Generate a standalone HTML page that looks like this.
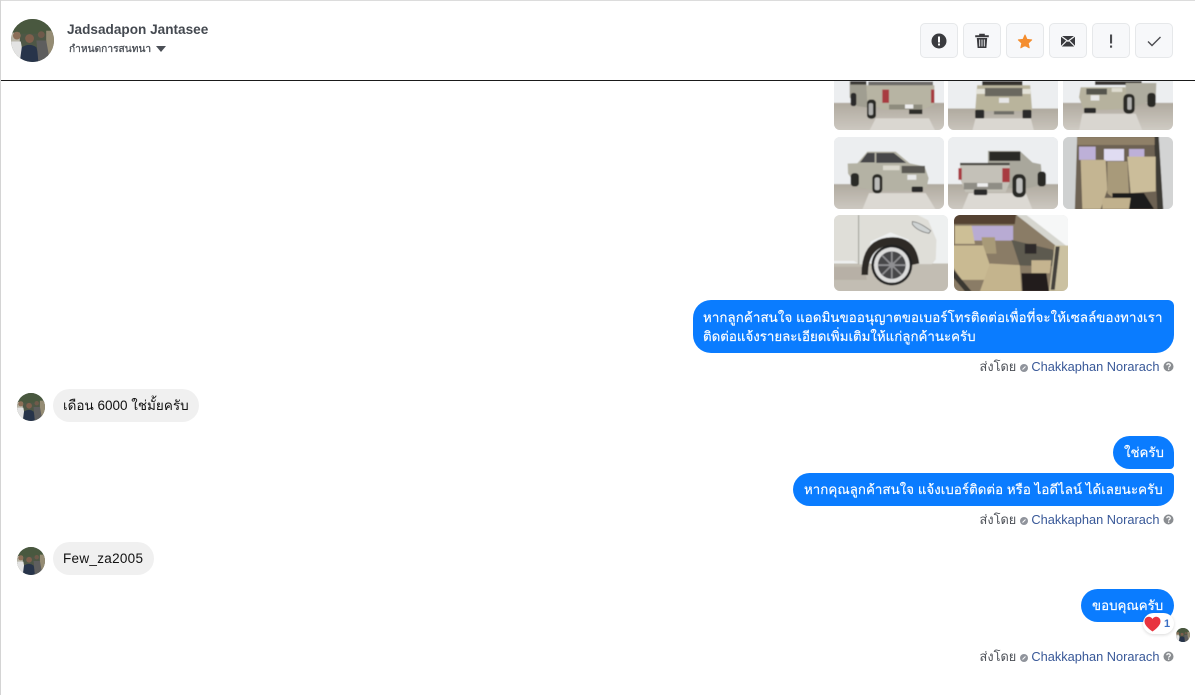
<!DOCTYPE html>
<html lang="th"><head><meta charset="utf-8"><title>Chat</title>
<style>
html,body{margin:0;padding:0;background:#fff}
body{width:1195px;height:695px;position:relative;overflow:hidden;font-family:"Liberation Sans","Noto Sans CJK SC",sans-serif;font-size:14px}
.a{position:absolute;white-space:nowrap}
.btn{position:absolute;top:23px;width:36px;height:33px;border:1px solid #e6e8ea;border-radius:5px;background:#f7f8fa}
.btn svg{position:absolute;left:0;top:0;width:36px;height:33px}
.b{position:absolute;background:#0a7cff;color:#fff;white-space:nowrap;box-sizing:border-box;line-height:19px;font-size:13.3px;-webkit-text-stroke:.15px #fff}
.g{position:absolute;background:#f0f0f0;color:#111;white-space:nowrap;box-sizing:border-box;height:33px;line-height:34px;border-radius:17px;padding:0 0 0 10px;font-size:13.5px}
.ph{position:absolute;border-radius:6px;overflow:hidden;background:#ddd}
.ph svg{display:block;width:100%;height:100%}
.s{position:absolute;right:21px;white-space:nowrap;font-size:12.8px;height:16px;line-height:16px;color:#4b4f56}
.s b{font-weight:normal;color:#385898}
.s svg{vertical-align:-1px}
.av{position:absolute;border-radius:50%;overflow:hidden}
.av svg{display:block;width:100%;height:100%}
</style></head><body>
<svg width="0" height="0" style="position:absolute"><defs>
<linearGradient id="fl" x1="0" y1="0" x2="0" y2="1"><stop offset="0" stop-color="#b0aa9f"/><stop offset="1" stop-color="#d2cec7"/></linearGradient>
<filter id="bl" x="-5%" y="-5%" width="110%" height="110%"><feGaussianBlur stdDeviation="1.600"/></filter>
<symbol id="avt" viewBox="0 0 44 44"><rect width="44" height="44" fill="#4e5746"/><rect x="0" y="0" width="44" height="15" fill="#49583f"/><rect x="0" y="14" width="9" height="30" fill="#b9b6a8"/><rect x="36" y="12" width="8" height="32" fill="#958c74"/><circle cx="6" cy="17" r="4" fill="#8c6f58"/><path d="M0 23h10l3 17H0z" fill="#e3e3e3"/><circle cx="19" cy="20" r="4.500" fill="#7f5f4c"/><path d="M11 29q8-5 15 0l4 15H9z" fill="#27344a"/><circle cx="31" cy="16" r="3.500" fill="#6f5a4a"/><path d="M26 22h10l4 22H28z" fill="#5e5e5e"/></symbol>
<symbol id="ic" viewBox="0 0 8 8"><circle cx="4" cy="4" r="4" fill="#90949c"/><path d="M2.500 5.500 5.500 2.500" stroke="#fff" stroke-width="1"/></symbol>
<symbol id="iq" viewBox="0 0 11 11"><circle cx="5.500" cy="5.500" r="5" fill="#8a8d91"/><path d="M3.800 4.300c0-2.100 3.500-2.100 3.500 0 0 1.200-1.700 1.200-1.700 2.300" fill="none" stroke="#fff" stroke-width="1.200"/><rect x="5" y="7.500" width="1.300" height="1.300" fill="#fff"/></symbol>
</defs></svg>

<div class="a" style="left:0;top:0;width:1195px;height:1px;background:#dcdcdc"></div>
<div class="a" style="left:0;top:0;width:1px;height:695px;background:#d4d4d4"></div>

<!-- Row 1 -->
<div class="ph" style="left:834px;top:81px;width:110px;height:49px;border-radius:0 0 6px 6px"><svg viewBox="25 9 330 148" preserveAspectRatio="none"><g filter="url(#bl)"><rect x="5" y="-10" width="370" height="180" fill="#eceef0"/><rect x="5" y="75" width="370" height="100" fill="url(#fl)"/><path d="M150 122h160l20 40H130z" fill="#dad7d1"/>
<path d="M72 9h50l5 80-32-4-23-26z" fill="#a09e91"/><rect x="74" y="9" width="48" height="11" fill="#3c3b38"/><rect x="75" y="45" width="17" height="40" rx="7" fill="#2c2b29"/>
<rect x="128" y="11" width="194" height="13" fill="#6c6b67"/><path d="M122 22h204v58l-36 16H175l-50-20z" fill="#b7b4a3"/><rect x="170" y="35" width="20" height="40" fill="#a83a40"/><rect x="316" y="35" width="10" height="40" fill="#a83a40"/><rect x="190" y="80" width="100" height="15" fill="#8e8c7e"/><rect x="238" y="80" width="25" height="12" fill="#eee"/><rect x="124" y="65" width="27" height="58" rx="11" fill="#2a2927"/><rect x="129" y="76" width="13" height="36" rx="5" fill="#b0b0ae"/><rect x="250" y="95" width="40" height="14" fill="#2f2e2c"/></g></svg></div>
<div class="ph" style="left:948px;top:81px;width:110px;height:49px;border-radius:0 0 6px 6px"><svg viewBox="368 9 328 148" preserveAspectRatio="none"><g filter="url(#bl)"><rect x="350" y="-10" width="370" height="180" fill="#eceef0"/><rect x="350" y="92" width="370" height="90" fill="url(#fl)"/><path d="M450 122h165l10 40H440z" fill="#dad7d1"/>
<rect x="470" y="9" width="120" height="14" fill="#34332f"/><path d="M455 22h158l6 78H449z" fill="#b9b49c"/><rect x="478" y="30" width="112" height="25" fill="#6a685f"/><rect x="452" y="33" width="26" height="15" fill="#e3e2d8"/><rect x="590" y="33" width="24" height="15" fill="#e3e2d8"/><rect x="520" y="60" width="30" height="15" fill="#e6e6e6"/><rect x="449" y="96" width="27" height="26" rx="4" fill="#2c2b29"/><rect x="590" y="96" width="27" height="26" rx="4" fill="#2c2b29"/><rect x="505" y="100" width="60" height="10" fill="#6f6e68"/></g></svg></div>
<div class="ph" style="left:1063px;top:81px;width:110px;height:49px;border-radius:0 0 6px 6px"><svg viewBox="712 9 330 148" preserveAspectRatio="none"><g filter="url(#bl)"><rect x="690" y="-10" width="370" height="180" fill="#eceef0"/><rect x="690" y="75" width="370" height="90" fill="url(#fl)"/><path d="M770 108h160l20 50H760z" fill="#d9d6d0"/>
<rect x="808" y="9" width="140" height="12" fill="#3a3936"/><path d="M900 15h92l-2 55-35 6-55 20z" fill="#aeac9f"/><path d="M765 28h135l5 65-130 5-15-40z" fill="#b6b29e"/><rect x="782" y="32" width="62" height="18" fill="#55544e"/><rect x="858" y="30" width="32" height="12" fill="#dedcd0"/><rect x="795" y="52" width="26" height="16" fill="#e8e8e8"/><rect x="775" y="90" width="36" height="16" rx="4" fill="#2c2b29"/><rect x="893" y="48" width="34" height="60" rx="14" fill="#2a2927"/><rect x="905" y="58" width="13" height="38" rx="5" fill="#b0b0ae"/><rect x="965" y="45" width="25" height="43" rx="10" fill="#2a2927"/></g></svg></div>

<!-- Row 2 -->
<div class="ph" style="left:834px;top:137px;width:110px;height:72px"><svg viewBox="25 176 330 217" preserveAspectRatio="none"><g filter="url(#bl)"><rect x="5" y="160" width="370" height="250" fill="#eceef0"/><rect x="5" y="318" width="370" height="90" fill="url(#fl)"/><path d="M130 345h170l30 50H110z" fill="#dcd9d3"/>
<path d="M95 255 125 220h85l42 35 45 10 12 35-6 28-45 10H150l-55-12-28-40-1-30z" fill="#b4b2a4"/><path d="M103 253 125 224h22v29zM152 224h52l38 30h-90z" fill="#47474a"/><rect x="228" y="263" width="70" height="22" fill="#5a5953"/><rect x="172" y="262" width="50" height="14" fill="#dbd9ce"/><rect x="245" y="290" width="27" height="15" fill="#e8e8e8"/><rect x="140" y="288" width="30" height="58" rx="13" fill="#2a2927"/><rect x="147" y="298" width="15" height="38" rx="6" fill="#bcbcba"/><rect x="75" y="285" width="25" height="40" rx="10" fill="#2a2927"/><rect x="258" y="325" width="34" height="17" rx="4" fill="#2c2b29"/></g></svg></div>
<div class="ph" style="left:948px;top:137px;width:110px;height:72px"><svg viewBox="368 176 328 217" preserveAspectRatio="none"><g filter="url(#bl)"><rect x="350" y="160" width="370" height="250" fill="#eceef0"/><rect x="350" y="318" width="370" height="90" fill="url(#fl)"/><path d="M430 345h170l20 50H410z" fill="#dcd9d3"/>
<path d="M487 218h95l38 35 25 5 5 60-40 12H540V255h-53z" fill="#a9a79c"/><rect x="491" y="220" width="93" height="28" fill="#2a2927"/><path d="M404 257h148v55l-12 30H420l-16-40z" fill="#c4c1b8"/><rect x="404" y="254" width="148" height="7" fill="#47463f"/><rect x="530" y="270" width="22" height="42" fill="#a83a40"/><rect x="399" y="270" width="10" height="35" fill="#a83a40"/><rect x="415" y="314" width="115" height="20" fill="#8f8d85"/><rect x="455" y="315" width="32" height="11" fill="#eee"/><rect x="445" y="334" width="40" height="17" rx="4" fill="#2c2b29"/><rect x="560" y="288" width="40" height="70" rx="17" fill="#2a2927"/><rect x="572" y="300" width="18" height="45" rx="7" fill="#c0c0be"/><rect x="635" y="280" width="25" height="45" rx="10" fill="#2a2927"/></g></svg></div>
<div class="ph" style="left:1063px;top:137px;width:110px;height:72px"><svg viewBox="712 176 330 217" preserveAspectRatio="none"><g filter="url(#bl)"><rect x="700" y="160" width="360" height="250" fill="#6d6252"/><path d="M700 160h55l-8 250h-47z" fill="#cfd1d1"/><path d="M990 160h70v250h-50z" fill="#d3d4d4"/><path d="M985 170h14l14 225h-18z" fill="#3e3b36"/><rect x="755" y="176" width="232" height="24" fill="#8f8068"/><rect x="760" y="205" width="50" height="40" fill="#bdb0d8"/><rect x="835" y="212" width="60" height="36" fill="#e0dcf2"/><rect x="910" y="212" width="46" height="36" fill="#bdb0d8"/><path d="M765 245h75l5 90-20 58h-55z" fill="#c4b592"/><path d="M845 250h60l5 95-35 25-30-25z" fill="#a89a7a"/><path d="M905 235h85v105l-75 5z" fill="#cbbd9a"/><path d="M860 345h95l30 48h-125z" fill="#1d1b1a"/><path d="M830 360h85l-5 33h-80z" fill="#c1b18d"/></g></svg></div>

<!-- Row 3 -->
<div class="ph" style="left:834px;top:215px;width:114px;height:76px"><svg viewBox="25 12 345 232" preserveAspectRatio="none"><g filter="url(#bl)"><rect x="5" y="0" width="380" height="260" fill="#eef0f0"/><rect x="5" y="160" width="380" height="100" fill="#c2bdb3"/><path d="M25 170h90l10 40H25z" fill="#b7b0a6"/>
<path d="M5 0h250l55 28 25 60-2 60-12 14h-50l-20-75-55-22-60 28-15 72-20-3-16-10H5z" fill="#dfded8"/><rect x="98" y="12" width="3" height="150" fill="#9c9b94"/><path d="M262 32q20 1 56 28l-6 8q-35-7-50-28z" fill="#cfd3d3" stroke="#555" stroke-width="2"/><path d="M108 195q0-115 95-115 70 0 80 80l-25 5q-15-60-55-60-75 0-75 90z" fill="#2e2a27"/><circle cx="200" cy="165" r="62" fill="#222"/><circle cx="200" cy="165" r="54" fill="#dcdcdb"/><circle cx="200" cy="165" r="42" fill="#46464a"/><circle cx="200" cy="165" r="10" fill="#77777a"/><path d="M200 123v84M158 165h84M170 135l60 60M230 135l-60 60" stroke="#8f8f92" stroke-width="5"/></g></svg></div>
<div class="ph" style="left:954px;top:215px;width:114px;height:76px"><svg viewBox="387 12 343 232" preserveAspectRatio="none"><g filter="url(#bl)"><rect x="370" y="0" width="380" height="260" fill="#8a7c66"/><path d="M370 0h205l-5 40H370z" fill="#544332"/><path d="M570 5h170v110l-40-10z" fill="#f6f7f7"/><path d="M575 12 605 12 730 110v25z" fill="#d6d6cf"/><rect x="435" y="45" width="130" height="45" fill="#b8abd3"/><path d="M390 45h50l10 55h-60z" fill="#cdbf96"/><path d="M470 80h40l5 50h-40z" fill="#a89a78"/><path d="M370 105h105l35 105H410l-40-60z" fill="#c9ba92"/><path d="M495 160l90 5 5 80H465z" fill="#c4b48d"/><path d="M370 160l70 85h-20l-50-60z" fill="#3a3833"/><path d="M560 88l125 30 5 50-105-2z" fill="#5d5a4f"/><rect x="600" y="100" width="35" height="30" fill="#2e2c2a"/><path d="M620 150h60l-5 40h-55z" fill="#c5b48f"/><path d="M590 190h75l8 55h-80z" fill="#211f1e"/><path d="M690 105h45v140h-62z" fill="#cbc1a1"/><path d="M693 108 705 108 690 240h-12z" fill="#45433c"/></g></svg></div>

<!-- Header -->
<div class="a" style="left:1px;top:80px;width:1194px;height:1px;background:#1a1a1a"></div>

<div class="av" style="left:11px;top:19px;width:43px;height:43px"><svg viewBox="0 0 44 44"><use href="#avt"/></svg></div>
<div class="a" style="left:67px;top:21px;font-size:13.6px;font-weight:bold;line-height:17px;color:#444950">Jadsadapon Jantasee</div>
<div class="a" style="left:69px;top:42px;font-size:10.2px;line-height:16px;color:#444950;-webkit-text-stroke:.25px #444950">กำหนดการสนทนา</div>
<div class="a" style="left:156px;top:46px;width:0;height:0;border-left:5.500px solid transparent;border-right:5.500px solid transparent;border-top:6px solid #4b4f56"></div>

<div class="btn" style="left:920px"><svg viewBox="0 0 36 33"><circle cx="18" cy="17" r="7.500" fill="#3a3b3f"/><rect x="17" y="12.500" width="2" height="6" fill="#fff"/><rect x="17" y="19.500" width="2" height="2" fill="#fff"/></svg></div>
<div class="btn" style="left:963px"><svg viewBox="0 0 36 33"><path d="M11.500 11.500h13v1.500h-13zM15.500 11.500v-1.500h5v1.500" fill="#3a3b3f" stroke="#3a3b3f" stroke-width=".6"/><path d="M12.800 14h10.400l-.8 10h-8.800z" fill="#3a3b3f"/><path d="M15.700 15.500v7M18 15.500v7M20.300 15.500v7" stroke="#f7f8fa" stroke-width=".9"/></svg></div>
<div class="btn" style="left:1006px"><svg viewBox="0 0 36 33"><path d="M18 11l2 4.400 4.700.5-3.500 3.200 1 4.700-4.200-2.400-4.200 2.400 1-4.700-3.500-3.200 4.700-.5z" fill="#f48d2e" stroke="#f48d2e" stroke-width="1" stroke-linejoin="round"/></svg></div>
<div class="btn" style="left:1049px"><svg viewBox="0 0 36 33"><path d="M11 12h14v10.500H11z" fill="#3a3b3f"/><path d="M11 12l7 5.200 7-5.200M11 22.500l5.500-5.500M25 22.500L19.500 17" fill="none" stroke="#f7f8fa" stroke-width="1.200"/></svg></div>
<div class="btn" style="left:1092px"><svg viewBox="0 0 36 33"><rect x="17" y="10.500" width="2.100" height="9" fill="#4b4c50"/><rect x="17" y="21.500" width="2.100" height="2.200" fill="#4b4c50"/></svg></div>
<div class="btn" style="left:1135px"><svg viewBox="0 0 36 33"><path d="M12 17.500l4 4 8.500-8.500" fill="none" stroke="#4b4c50" stroke-width="1.400"/></svg></div>

<!-- Messages -->
<div class="b" style="left:693px;top:300px;width:481px;height:53px;border-radius:18px 6px 18px 18px;padding:8px 10px;"><span style="letter-spacing:.09px">หากลูกค้าสนใจ แอดมินขออนุญาตขอเบอร์โทรติดต่อเพื่อที่จะให้เซลล์ของทางเรา</span><br>ติดต่อแจ้งรายละเอียดเพิ่มเติมให้แก่ลูกค้านะครับ</div>
<div class="s" style="top:359px">ส่งโดย <svg width="8" height="8"><use href="#ic"/></svg> <b>Chakkaphan Norarach</b> <svg width="11" height="11"><use href="#iq"/></svg></div>

<div class="av" style="left:17px;top:393px;width:28px;height:28px"><svg viewBox="0 0 44 44"><use href="#avt"/></svg></div>
<div class="g" style="left:53px;top:389px;width:146px">เดือน 6000 ใช่มั้ยครับ</div>

<div class="b" style="left:1113px;top:436px;width:61px;height:33px;border-radius:17px 17px 4px 17px;padding:7px 0 7px 11px;">ใช่ครับ</div>
<div class="b" style="left:793px;top:473px;width:381px;height:33px;border-radius:17px 4px 17px 17px;padding:7px 0 7px 11px;letter-spacing:.04px">หากคุณลูกค้าสนใจ แจ้งเบอร์ติดต่อ หรือ ไอดีไลน์ ได้เลยนะครับ</div>
<div class="s" style="top:512px">ส่งโดย <svg width="8" height="8"><use href="#ic"/></svg> <b>Chakkaphan Norarach</b> <svg width="11" height="11"><use href="#iq"/></svg></div>

<div class="av" style="left:17px;top:547px;width:28px;height:28px"><svg viewBox="0 0 44 44"><use href="#avt"/></svg></div>
<div class="g" style="left:53px;top:542px;width:101px;letter-spacing:.3px">Few_za2005</div>

<div class="b" style="left:1081px;top:589px;width:93px;height:33px;border-radius:17px;padding:7px 0 7px 11px;">ขอบคุณครับ</div>
<div class="a" style="left:1143px;top:613px;width:31px;height:21px;background:#fff;border-radius:11px;box-shadow:0 1px 3px rgba(0,0,0,.15)"></div>
<svg class="a" style="left:1144px;top:616px" width="17" height="16" viewBox="0 0 17 16"><path d="M8.500 15.500C3 11.500.5 8.500.5 5.200.5 2.600 2.500.8 4.700.8c1.600 0 3 .8 3.800 2.200C9.300 1.600 10.700.8 12.300.8c2.200 0 4.200 1.800 4.200 4.400 0 3.300-2.500 6.300-8 10.300z" fill="#e8343f"/></svg>
<div class="a" style="left:1164px;top:618px;font-size:11px;line-height:13px;font-weight:bold;color:#3b6fc4">1</div>
<div class="av" style="left:1176px;top:628px;width:14px;height:14px"><svg viewBox="0 0 44 44"><use href="#avt"/></svg></div>
<div class="s" style="top:649px">ส่งโดย <svg width="8" height="8"><use href="#ic"/></svg> <b>Chakkaphan Norarach</b> <svg width="11" height="11"><use href="#iq"/></svg></div>
</body></html>
